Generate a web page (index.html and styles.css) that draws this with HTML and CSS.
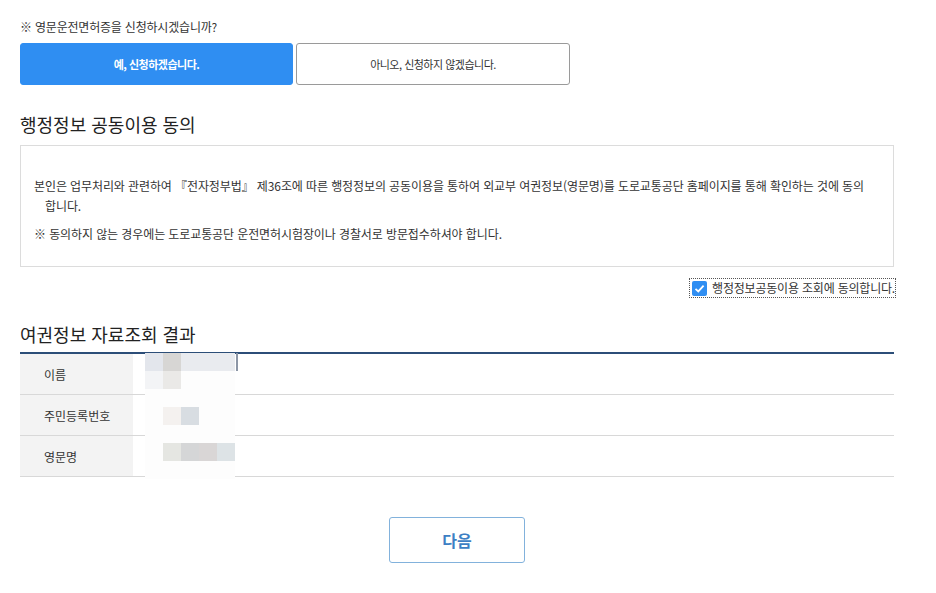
FILE: index.html
```html
<!DOCTYPE html>
<html lang="ko">

<head>
  <meta charset="UTF-8" />
  <meta name="viewport" content="width=device-width, initial-scale=1.0" />
  <title>영문운전면허증 신청</title>
  <link rel="stylesheet" href="styles.css">
</head>

<body>

  <div class="wrap">

    <p class="question">※ 영문운전면허증을 신청하시겠습니까?</p>
    <div class="choice">
      <button type="button" class="choice-btn on">예, 신청하겠습니다.</button>
      <button type="button" class="choice-btn">아니오, 신청하지 않겠습니다.</button>
    </div>

    <h2 class="tit">행정정보 공동이용 동의</h2>
    <div class="agree-box">
      <p class="agree-txt">본인은 업무처리와 관련하여 『전자정부법』 제36조에 따른 행정정보의 공동이용을 통하여 외교부 여권정보(영문명)를 도로교통공단 홈페이지를 통해 확인하는 것에 동의합니다.</p>
      <p class="agree-note">※ 동의하지 않는 경우에는 도로교통공단 운전면허시험장이나 경찰서로 방문접수하셔야 합니다.</p>
    </div>
    <div class="agree-check">
      <label class="chk">
        <span class="chk-box">
          <svg width="11" height="11" viewBox="0 0 11 11"><path d="M1.5 5.8 L4.3 8.4 L9.6 2.6" fill="none" stroke="#fff" stroke-width="1.8" /></svg>
        </span>
        행정정보공동이용 조회에 동의합니다.
      </label>
    </div>

    <h2 class="tit tit2">여권정보 자료조회 결과</h2>
    <div class="result">
      <table class="result-tbl">
        <tr>
          <th>이름</th>
          <td></td>
        </tr>
        <tr>
          <th>주민등록번호</th>
          <td></td>
        </tr>
        <tr>
          <th>영문명</th>
          <td></td>
        </tr>
      </table>
      <!-- 개인정보 가림 -->
      <div class="mosaic">
        <span class="c1"></span><span class="c2"></span><span class="c3"></span><span class="c3"></span><span class="c3"></span>
        <span class="c4"></span><span class="c5"></span><span></span><span></span><span></span>
        <span></span><span></span><span></span><span></span><span></span>
        <span></span><span class="c6"></span><span class="c7"></span><span></span><span></span>
        <span></span><span></span><span></span><span></span><span></span>
        <span></span><span class="c8"></span><span class="c9"></span><span class="c10"></span><span class="c11"></span>
        <span></span><span></span><span></span><span></span><span></span>
      </div>
      <div class="mosaic-line"></div>
    </div>

    <div class="btn-area">
      <button type="button" class="btn-next">다음</button>
    </div>

  </div>

</body>

</html>
```

FILE: styles.css
```css
body {
  margin: 0;
  background-color: #fff;
  font-family: "Noto Sans CJK KR", "Noto Sans", sans-serif;
  color: #333;
}

.wrap {
  width: 874px;
  padding: 20px 0 0 20px;
}

.question {
  margin: 0;
  font-size: 12px;
  line-height: 14px;
  letter-spacing: -0.2px;
  color: #333;
}

.choice {
  display: flex;
  gap: 3px;
  margin-top: 9px;
}

.choice-btn {
  width: 274px;
  height: 42px;
  font-family: inherit;
  font-size: 11px;
  letter-spacing: -0.5px;
  color: #333;
  background-color: #fff;
  border: 1px solid #9a9a9a;
  border-radius: 3px;
  cursor: pointer;
}

.choice-btn.on {
  width: 273px;
  background-color: #2f8ef2;
  border-color: #2f8ef2;
  color: #fff;
  font-weight: bold;
}

.tit {
  margin: 27px 0 0;
  font-size: 18px;
  line-height: 24px;
  font-weight: normal;
  color: #222;
}

.agree-box {
  margin-top: 9px;
  padding: 30px 26px 22px 13px;
  border: 1px solid #dcdcdc;
}

.agree-box p {
  margin: 0;
  font-size: 12px;
  line-height: 20px;
  letter-spacing: -0.1px;
  color: #333;
}

.agree-txt {
  padding-left: 11px;
  text-indent: -11px;
}

.agree-box .agree-note {
  margin-top: 8px;
}

.agree-check {
  display: flex;
  justify-content: flex-end;
  margin-top: 12px;
}

.chk {
  display: flex;
  align-items: center;
  gap: 5px;
  padding: 1px 0 1px 2px;
  font-size: 12px;
  line-height: 16px;
  letter-spacing: -0.2px;
  color: #333;
  outline: 1px dotted #555;
  margin-right: -1px;
}

.chk-box {
  display: flex;
  align-items: center;
  justify-content: center;
  width: 15px;
  height: 15px;
  background-color: #2f8ef2;
  border-radius: 2px;
}

.tit2 {
  margin-top: 25px;
}

.result {
  position: relative;
  margin-top: 6px;
}

.result-tbl {
  width: 100%;
  border-collapse: collapse;
  border-top: 2px solid #2c4e78;
}

.result-tbl th,
.result-tbl td {
  height: 40px;
  padding: 0;
  border-bottom: 1px solid #d8d8d8;
  font-size: 12px;
  font-weight: normal;
}

.result-tbl th {
  width: 89px;
  padding-left: 24px;
  text-align: left;
  background-color: #f3f3f3;
  color: #333;
}

.mosaic {
  position: absolute;
  left: 125px;
  top: 1px;
  display: grid;
  grid-template-columns: repeat(5, 18px);
  grid-auto-rows: 18px;
  background-color: #fff;
}

.mosaic span {
  background-color: #fdfdfd;
}

.mosaic .c1 { background-color: #e3e6ec; }
.mosaic .c2 { background-color: #d7d6d4; }
.mosaic .c3 { background-color: #e9ebef; }
.mosaic .c4 { background-color: #f3f4f6; }
.mosaic .c5 { background-color: #eae9e7; }
.mosaic .c6 { background-color: #f4f1ef; }
.mosaic .c7 { background-color: #d8dde2; }
.mosaic .c8 { background-color: #e5e6e2; }
.mosaic .c9 { background-color: #d5d6d7; }
.mosaic .c10 { background-color: #d9d6d6; }
.mosaic .c11 { background-color: #dde3e6; }

.mosaic-line {
  position: absolute;
  left: 216px;
  top: 1px;
  width: 2px;
  height: 18px;
  background-color: #8c96a6;
}

.btn-area {
  display: flex;
  justify-content: center;
  margin-top: 40px;
}

.btn-next {
  width: 136px;
  height: 46px;
  font-family: inherit;
  font-size: 16px;
  font-weight: bold;
  color: #3d7fc4;
  background-color: #fff;
  border: 1px solid #82b2dc;
  border-radius: 3px;
  cursor: pointer;
}
```
